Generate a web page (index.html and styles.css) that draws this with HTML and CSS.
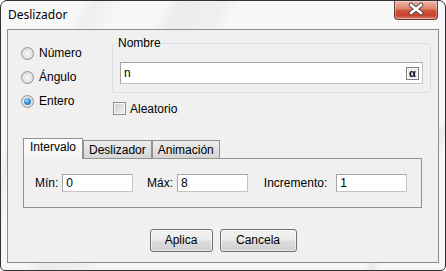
FILE: index.html
```html
<!DOCTYPE html>
<html lang="es">

<head>
    <meta charset="UTF-8">
    <meta name="viewport" content="width=device-width, initial-scale=1.0">
    <title>Deslizador</title>
    <link rel="stylesheet" href="styles.css">
</head>

<body>
    <div class="window">
        <div class="titlebar">
            <span class="title">Deslizador</span>
            <div class="close">
                <svg width="44" height="19" viewBox="0 0 44 19">
                    <path d="M17 5 L27 13 M27 5 L17 13" stroke="#5a4a48" stroke-width="4.6" stroke-linecap="round" fill="none" />
                    <path d="M17 5 L27 13 M27 5 L17 13" stroke="#ffffff" stroke-width="2.6" stroke-linecap="round" fill="none" />
                </svg>
            </div>
        </div>

        <div class="client">
            <div class="top">
                <div class="types">
                    <div class="opt"><span class="radio"></span>Número</div>
                    <div class="opt"><span class="radio"></span>Ángulo</div>
                    <div class="opt"><span class="radio on"></span>Entero</div>
                </div>
                <div class="naming">
                    <fieldset class="group">
                        <legend>Nombre</legend>
                        <div class="field name">
                            <span>n</span>
                            <span class="alpha">α</span>
                        </div>
                    </fieldset>
                    <div class="check"><span class="box"></span>Aleatorio</div>
                </div>
            </div>

            <div class="tabs">
                <div class="tabstrip">
                    <span class="tab on">Intervalo</span>
                    <span class="tab">Deslizador</span>
                    <span class="tab">Animación</span>
                </div>
                <div class="panel">
                    <span class="lbl">Mín:</span>
                    <span class="field num">0</span>
                    <span class="lbl">Máx:</span>
                    <span class="field num">8</span>
                    <span class="lbl inc">Incremento:</span>
                    <span class="field num">1</span>
                </div>
            </div>

            <div class="actions">
                <div class="btn apply">Aplica</div>
                <div class="btn cancel">Cancela</div>
            </div>
        </div>
    </div>
</body>

</html>
```

FILE: styles.css
```css
* {
    box-sizing: border-box;
}

body {
    margin: 0;
    background-color: #ffffff;
    font-family: "Liberation Sans", Arial, sans-serif;
    font-size: 12px;
    color: #000000;
}

.window {
    width: 446px;
    height: 271px;
    border: 1px solid #323232;
    border-radius: 7px 7px 5px 5px;
    background-color: #f7f7f7;
    background-image:
        linear-gradient(118deg, transparent 14%, rgba(0, 0, 0, 0.035) 16%, transparent 21%),
        linear-gradient(118deg, transparent 28%, rgba(0, 0, 0, 0.045) 31%, rgba(0, 0, 0, 0.03) 38%, transparent 41%),
        linear-gradient(118deg, transparent 86%, rgba(0, 0, 0, 0.05) 87%, transparent 89%);
    overflow: hidden;
}

.titlebar {
    height: 28px;
    display: flex;
    justify-content: space-between;
    align-items: flex-start;
    padding: 0 7px 0 7px;
}

.title {
    font-family: "Noto Sans", sans-serif;
    font-size: 12px;
    line-height: 16px;
    padding-top: 6px;
}

.close {
    width: 44px;
    height: 19px;
    border: 1px solid #6b3a30;
    border-top: none;
    border-radius: 0 0 4px 4px;
    background: linear-gradient(#ecb3a5 0%, #e08a74 40%, #cf4f36 55%, #c6432b 80%, #d8826c 100%);
    box-shadow: inset 0 0 0 1px rgba(255, 255, 255, 0.35);
}

.close svg {
    display: block;
    margin: -1px 0 0 -1px;
}

.client {
    height: 234px;
    margin: 0 6px;
    border: 1px solid #8c8c8c;
    background-color: #f0f0f0;
}

/* top part: type + name */
.top {
    display: flex;
    padding-left: 13px;
}

.types {
    width: 91px;
    padding-top: 11px;
}

.opt {
    height: 24px;
    display: flex;
    align-items: center;
}

.radio {
    width: 13px;
    height: 13px;
    margin-right: 5px;
    border-radius: 50%;
    border: 1px solid #8f9090;
    background: radial-gradient(circle at 50% 50%, #f7f7f7 0%, #e6e6e6 50%, #d2d2d2 100%);
    display: flex;
    align-items: center;
    justify-content: center;
}

.radio.on::after {
    content: "";
    width: 7px;
    height: 7px;
    border-radius: 50%;
    background: radial-gradient(circle at 40% 35%, #a8dcfb 0%, #3d92d2 45%, #1a5d96 100%);
}

.naming {
    width: 319px;
    padding-top: 6px;
}

.group {
    margin: 0;
    padding: 12px 7px 8px 7px;
    border: 1px solid #d5dfe5;
    border-radius: 3px;
}

.group legend {
    margin-left: -3px;
    padding: 0 1px;
    line-height: 14px;
}

.field {
    background-color: #ffffff;
    border: 1px solid #a5a5a5;
    border-right-color: #c4c4c4;
    border-bottom-color: #c4c4c4;
    padding-left: 3px;
}

.name {
    height: 22px;
    display: flex;
    justify-content: space-between;
    align-items: center;
    padding-right: 3px;
}

.alpha {
    width: 13px;
    height: 13px;
    border: 1px solid #7d7d7d;
    box-shadow: inset 0 0 0 1px #ffffff;
    background-color: #ececec;
    font-size: 11px;
    font-weight: bold;
    line-height: 11px;
    text-align: center;
}

.check {
    height: 15px;
    margin-top: 8px;
    padding-left: 1px;
    display: flex;
    align-items: center;
}

.box {
    width: 13px;
    height: 13px;
    margin-right: 4px;
    border: 1px solid #8f8f8f;
    background: linear-gradient(135deg, #c9c9c9, #f4f4f4);
    box-shadow: inset 0 0 0 1px #f6f6f6;
}

/* tabs */
.tabs {
    margin: 22px 16px 0 15px;
}

.tabstrip {
    display: flex;
    align-items: flex-end;
    height: 20px;
}

.tab {
    height: 18px;
    padding: 0 5px;
    line-height: 19px;
    border: 1px solid #919191;
    border-bottom: none;
    background: linear-gradient(#ececec, #d6d6d6);
    overflow: hidden;
}

.tab.on {
    height: 21px;
    margin: 0 0 -1px 0;
    padding: 0 6px;
    line-height: 17px;
    background: linear-gradient(#ffffff, #f4f4f4);
    position: relative;
    z-index: 1;
}

.panel {
    height: 50px;
    border: 1px solid #919191;
    display: flex;
    align-items: center;
    padding-left: 11px;
}

.lbl {
    margin-right: 4px;
}

.num {
    width: 72px;
    height: 18px;
    line-height: 16px;
    margin-right: 14px;
}

.lbl.inc {
    margin-left: 2px;
    margin-right: 9px;
}

/* buttons */
.actions {
    display: flex;
    justify-content: center;
    gap: 7px;
    margin-top: 21px;
}

.btn {
    height: 23px;
    line-height: 21px;
    text-align: center;
    border: 1px solid #707070;
    border-radius: 3px;
    background: linear-gradient(#f2f2f2 0%, #ebebeb 48%, #dddddd 52%, #cfcfcf 100%);
    box-shadow: inset 0 0 0 1px rgba(255, 255, 255, 0.6);
}

.apply {
    width: 63px;
}

.cancel {
    width: 77px;
}
```
